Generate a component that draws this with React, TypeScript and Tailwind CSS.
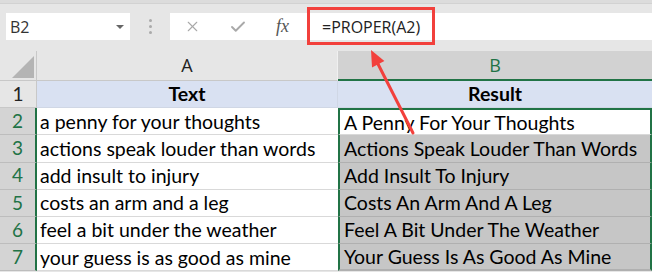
import { X, Check } from 'lucide-react';

const rows = [
  ['a penny for your thoughts', 'A Penny For Your Thoughts'],
  ['actions speak louder than words', 'Actions Speak Louder Than Words'],
  ['add insult to injury', 'Add Insult To Injury'],
  ['costs an arm and a leg', 'Costs An Arm And A Leg'],
  ['feel a bit under the weather', 'Feel A Bit Under The Weather'],
  ['your guess is as good as mine', 'Your Guess Is As Good As Mine'],
];

const cellFont = "font-['Lato','Open_Sans',sans-serif]";

export default function App() {
  return (
    <div className="relative w-[652px] h-[272px] overflow-hidden bg-[#e6e6e6] font-['Open_Sans','Liberation_Sans',sans-serif]">
      {/* Formula bar */}
      <div className="h-[4px] bg-[#dcdcdc] border-b border-[#d2d2d2]" />
      <div className="h-[47px] flex items-start pt-[9px] pl-[6px]">
        <div className="w-[124px] h-[27px] bg-white flex items-center justify-between pl-[4px] pr-[6px]">
          <span className="text-[16px] text-[#333]">B2</span>
          <span className="w-0 h-0 border-l-[4px] border-r-[4px] border-t-[4px] border-l-transparent border-r-transparent border-t-[#666]" />
        </div>
        <div className="w-[40px] h-[27px] flex flex-col items-center justify-center gap-[3px]">
          <span className="w-[3px] h-[3px] rounded-full bg-[#aaa]" />
          <span className="w-[3px] h-[3px] rounded-full bg-[#aaa]" />
          <span className="w-[3px] h-[3px] rounded-full bg-[#aaa]" />
        </div>
        <div className="flex-1 h-[27px] bg-white flex items-center">
          <div className="w-[136px] flex items-center">
            <div className="w-[45px] flex justify-center">
              <X className="w-[17px] h-[17px] text-[#a9a9a9]" strokeWidth={1.5} />
            </div>
            <div className="w-[45px] flex justify-center">
              <Check className="w-[18px] h-[18px] text-[#a9a9a9]" strokeWidth={2.5} />
            </div>
            <div className="w-[45px] flex justify-center">
              <span className="italic text-[18px] text-[#555] font-['Liberation_Serif',serif]">fx</span>
            </div>
          </div>
          <span className="ml-[16px] text-[16px] text-[#222]">=PROPER(A2)</span>
        </div>
      </div>

      {/* Sheet */}
      <div className="grid grid-cols-[37px_301px_314px]">
        {/* column headers */}
        <div className="h-[30px] bg-[#e6e6e6] border-r border-b border-[#c8c8c8] relative">
          <svg className="absolute right-[2px] bottom-[2px]" width="22" height="22" viewBox="0 0 22 22">
            <polygon points="22,0 22,22 0,22" fill="#b4b4b4" />
          </svg>
        </div>
        <div className="h-[30px] bg-[#e6e6e6] border-b border-[#c8c8c8] border-r border-r-[#f0f0f0] flex items-center justify-center text-[18px] text-[#222]">
          A
        </div>
        <div className="h-[30px] bg-[#d2d2d2] border-b-2 border-[#217346] flex items-center justify-center text-[18px] text-[#217346]">
          B
        </div>

        {/* header row */}
        <div className="h-[27.2px] bg-[#e6e6e6] border-r border-b border-[#c8c8c8] flex items-center justify-center text-[19px] text-[#222] font-['Lato',sans-serif]">
          1
        </div>
        <div className={`h-[27.2px] bg-[#d9e1f2] border-r border-b border-[#d0d7e5] flex items-center justify-center text-[19.5px] font-bold text-black ${cellFont}`}>
          Text
        </div>
        <div className={`h-[27.2px] bg-[#d9e1f2] border-b border-[#d0d7e5] flex items-center justify-center text-[19.5px] font-bold text-black ${cellFont}`}>
          Result
        </div>

        {rows.map(([a, b], i) => (
          <div key={i} className="contents">
            <div className="h-[27.2px] bg-[#d4d4d4] border-r-2 border-r-[#217346] border-b border-b-[#bdbdbd] flex items-center justify-center text-[19px] text-[#217346] font-['Lato',sans-serif]">
              {i + 2}
            </div>
            <div className={`h-[27.2px] bg-white border-b border-[#d9d9d9] flex items-center pl-[3px] text-[19.5px] text-black whitespace-nowrap ${cellFont}`}>
              {a}
            </div>
            <div
              className={`h-[27.2px] border-b flex items-center pl-[4px] text-[19.5px] text-black whitespace-nowrap border-l-2 border-r-2 border-l-[#217346] border-r-[#217346] ${cellFont} ${
                i === 0 ? 'bg-white border-t-2 border-t-[#217346] border-b-[#d9d9d9]' : 'bg-[#c6c6c6] border-b-[#b0b0b0]'
              } ${i === rows.length - 1 ? 'border-b-2 border-b-[#217346]' : ''}`}
            >
              {b}
            </div>
          </div>
        ))}
      </div>

      {/* annotation */}
      <div className="absolute left-[307px] top-[7px] w-[128px] h-[38px] border-[3px] border-[#f2403c]" />
      <svg className="absolute left-0 top-0 pointer-events-none" width="652" height="272">
        <line x1="413" y1="133" x2="377" y2="62" stroke="#f2403c" strokeWidth="3" strokeLinecap="round" />
        <polygon points="371,50 384.4,61.1 372,67.5" fill="#f2403c" />
      </svg>
    </div>
  );
}
